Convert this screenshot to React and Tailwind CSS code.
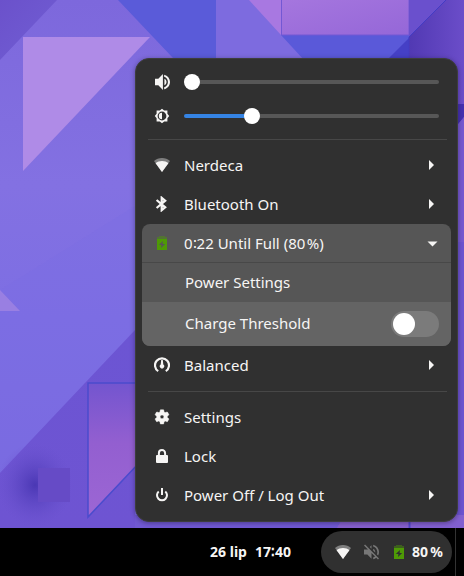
import { useState } from "react";

function Wallpaper() {
  return (
    <svg
      className="absolute inset-0 h-full w-full"
      viewBox="0 0 464 528"
      preserveAspectRatio="xMaxYMax slice"
      aria-hidden="true"
    >
      <defs>
        <linearGradient id="base" x1="0" y1="0" x2="0" y2="1">
          <stop offset="0" stopColor="#7d68dc" />
          <stop offset="0.35" stopColor="#8371e2" />
          <stop offset="0.6" stopColor="#7d6ee3" />
          <stop offset="1" stopColor="#7868e0" />
        </linearGradient>
        <linearGradient id="corner" x1="0" y1="0" x2="1" y2="1">
          <stop offset="0" stopColor="#6b51cb" />
          <stop offset="1" stopColor="#715fd4" />
        </linearGradient>
        <linearGradient id="pink" x1="0" y1="0" x2="1" y2="1">
          <stop offset="0" stopColor="#a576de" />
          <stop offset="1" stopColor="#9567d8" />
        </linearGradient>
        <linearGradient id="shard" x1="0" y1="0" x2="0" y2="1">
          <stop offset="0" stopColor="#7355cf" />
          <stop offset="0.45" stopColor="#935fd0" />
          <stop offset="1" stopColor="#9c66d4" />
        </linearGradient>
        <linearGradient id="edge" x1="0" y1="0" x2="1" y2="0">
          <stop offset="0" stopColor="#5139b3" />
          <stop offset="1" stopColor="#6b4dc9" />
        </linearGradient>
        <linearGradient id="floor" x1="0" y1="0" x2="0" y2="1">
          <stop offset="0" stopColor="#6c55d3" />
          <stop offset="1" stopColor="#6e54d2" />
        </linearGradient>
        <radialGradient id="shade">
          <stop offset="0" stopColor="#4a37b4" />
          <stop offset="0.5" stopColor="#5843bf" stopOpacity="0.5" />
          <stop offset="1" stopColor="#6850cc" stopOpacity="0" />
        </radialGradient>
      </defs>
      <rect width="464" height="528" fill="url(#base)" />
      <path d="M0 0H57L0 60Z" fill="url(#corner)" />
      <path d="M0 290L135 206V330L0 473Z" fill="#7a6ce3" opacity="0.350" />
      <path d="M23 37H150L23 171Z" fill="#af8be7" />
      <path d="M118 0H216V100L173 58Z" fill="#5a5bd9" />
      <path d="M216 0H464V60H216Z" fill="#7d6bdf" />
      <path d="M249 0H281V35Z" fill="#a878e1" />
      <path d="M281 35H409V60H304Z" fill="#5a59d9" />
      <path d="M409 38V60H387Z" fill="#4540c6" />
      <path d="M281 0H409V35H281Z" fill="url(#pink)" />
      <path d="M281.500 0V35H409V0" fill="none" stroke="#7358d4" />
      <path d="M409 0H464V528H409Z" fill="url(#edge)" />
      <path d="M409 0H446L409 37Z" fill="#6a50cd" />
      <path d="M446 0L409 37V60" fill="none" stroke="#433cc4" />
      <path d="M455 104H464V117L455 128Z" fill="#4530b0" />
      <path d="M455 128L464 117V242H455Z" fill="#7558d0" />
      <path d="M455 242H464V528H455Z" fill="#6c53d0" />
      <path d="M0 290L20 311H0Z" fill="#997fe2" />
      <path d="M0 473L135 330V528H0Z" fill="url(#floor)" />
      <ellipse cx="35" cy="485" rx="38" ry="42" fill="url(#shade)" />
      <path d="M38 468H70V502H38Z" fill="#664bc6" />
      <path d="M88 383H172V428L88 517Z" fill="url(#shard)" stroke="#4b4bcd" strokeWidth="1.500" />
      <path d="M135 515H345L337 528H135Z" fill="#7159d3" />
      <path d="M345 515H409V528H337Z" fill="#8660cd" />
      <path d="M409 515H464V528H409Z" fill="#8260d0" />
      <path d="M409.500 515V528" stroke="#5045c8" strokeWidth="2" />
    </svg>
  );
}

function Icon({ children, viewBox = "0 0 16 16", className = "" }) {
  return (
    <svg
      className={`h-4 w-4 shrink-0 ${className}`}
      viewBox={viewBox}
      fill="currentColor"
      aria-hidden="true"
    >
      {children}
    </svg>
  );
}

const VolumeIcon = () => (
  <Icon viewBox="1.800 2.400 19.200 19.200">
    <path d="M3 8v8h4l5.500 5.500V2.500L7 8H3zM16.800 12c0-1.770-1.020-3.290-2.500-4.030v8.050c1.480-.73 2.500-2.250 2.500-4.020zM14 3.230v2.400c2.890.86 4.500 3.300 4.500 6.370s-1.610 5.510-4.500 6.370v2.400c4.010-.91 7-4.490 7-8.770s-2.990-7.860-7-8.770z" />
  </Icon>
);

const MutedIcon = () => (
  <Icon viewBox="1.800 2.400 19.200 19.200" className="text-[#777777]">
    <path d="M16.500 12c0-1.770-1.020-3.290-2.500-4.030v2.210l2.450 2.450c.03-.2.050-.41.050-.63zm2.500 0c0 .94-.2 1.820-.54 2.640l1.510 1.510C20.630 14.910 21 13.500 21 12c0-4.280-2.990-7.860-7-8.770v2.060c2.890.86 5 3.540 5 6.710zM4.270 3L3 4.270 7.730 9H3v6h4l5 5v-6.730l4.250 4.250c-.67.52-1.420.93-2.250 1.180v2.060c1.380-.31 2.630-.95 3.690-1.810L19.730 21 21 19.730l-9-9L4.270 3zM12 4L9.910 6.090 12 8.180V4z" />
  </Icon>
);

const BrightnessIcon = () => (
  <Icon>
    <path
      fillRule="evenodd"
      d="M8 0.800L10.200 2.600H13.400V5.800L15.200 8L13.400 10.200V13.400H10.200L8 15.200L5.800 13.400H2.600V10.200L0.800 8L2.600 5.800V2.600H5.800ZM8 3.600A4.400 4.400 0 1 0 8 12.400A4.400 4.400 0 1 0 8 3.600Z"
    />
    <path d="M8 4.800A3.200 3.200 0 0 0 8 11.200Z" />
  </Icon>
);

const WifiIcon = () => (
  <Icon>
    <path d="M8 1C4.900 1 2.100 2.100 0 4L8 15L16 4C13.900 2.100 11.100 1 8 1Z" opacity="0.400" />
    <path d="M8 4C5.500 4 3.300 4.800 1.600 6.200L8 15L14.400 6.200C12.700 4.800 10.500 4 8 4Z" />
  </Icon>
);

const BluetoothIcon = () => (
  <Icon>
    <path
      d="M2.600 4L11.200 11.300L7.700 14.200V1.800L11.200 4.700L2.600 12"
      fill="none"
      stroke="currentColor"
      strokeWidth="2.200"
    />
  </Icon>
);

const BatteryIcon = () => (
  <Icon className="text-[#4e9a06]">
    <path d="M3 4V2H5V1H11V2H13V4Z" opacity="0.450" />
    <path fillRule="evenodd" d="M3 4H13V15H3ZM9 6L4.800 10H7.400L7 13L11.200 9H8.600Z" />
  </Icon>
);

const GaugeIcon = () => (
  <Icon>
    <path d="M4.200 14.200A7 7 0 1 1 11.800 14.200" fill="none" stroke="currentColor" strokeWidth="2.200" />
    <path d="M7.200 3H8.800L9.300 7.400A2.200 2.200 0 1 1 6.700 7.400Z" />
  </Icon>
);

const CogIcon = () => (
  <Icon viewBox="1.200 1.400 21.600 21.600">
    <path
      fillRule="evenodd"
      d="M19.140 12.940c.04-.3.060-.61.060-.94 0-.32-.02-.64-.07-.94l2.030-1.580c.18-.14.230-.41.120-.61l-1.920-3.320c-.12-.22-.37-.29-.59-.22l-2.390.96c-.5-.38-1.030-.7-1.620-.94L14.400 2.810c-.04-.24-.24-.41-.48-.41h-3.840c-.24 0-.43.17-.47.41L9.250 5.350C8.660 5.590 8.120 5.920 7.630 6.290L5.240 5.330c-.22-.08-.47 0-.59.22L2.740 8.870c-.12.21-.08.47.12.61l2.030 1.580c-.05.3-.09.63-.09.94s.02.640.07.94l-2.030 1.580c-.18.14-.23.41-.12.61l1.920 3.320c.12.220.370.290.590.220l2.390-.96c.5.380 1.030.7 1.620.94l.36 2.540c.05.240.240.410.480.410h3.840c.24 0 .44-.17.47-.41l.36-2.540c.59-.24 1.130-.56 1.620-.94l2.390.96c.22.080.470 0 .59-.22l1.920-3.320c.12-.22.070-.47-.12-.61l-2.010-1.580zM12 14.600a2.600 2.600 0 1 1 0-5.200 2.600 2.600 0 0 1 0 5.200z"
      stroke="currentColor"
      strokeWidth="0.600"
    />
  </Icon>
);

const LockIcon = () => (
  <Icon>
    <path d="M4.900 8V5.200A3.100 3.100 0 0 1 11.100 5.200V8" fill="none" stroke="currentColor" strokeWidth="2" />
    <rect x="2" y="7" width="12" height="8" rx="1" />
  </Icon>
);

const PowerIcon = () => (
  <Icon>
    <path d="M8 1V8" fill="none" stroke="currentColor" strokeWidth="2" />
    <path d="M4.700 4.500A5 5 0 1 0 11.300 4.500" fill="none" stroke="currentColor" strokeWidth="2" />
  </Icon>
);

const ArrowRight = () => (
  <Icon>
    <path d="M6 3L11 8L6 13Z" />
  </Icon>
);

const ArrowDown = () => (
  <Icon>
    <path d="M4.500 6.500H14.500L9.500 11.500Z" />
  </Icon>
);

function SliderRow({ id, label, icon, initial }) {
  const [value, setValue] = useState(initial);
  return (
    <div className="flex h-[34px] items-center gap-3.5 px-3">
      <label htmlFor={id} aria-label={label}>
        {icon}
      </label>
      <input
        id={id}
        type="range"
        min="0"
        max="100"
        value={value}
        onChange={(e) => setValue(Number(e.target.value))}
        style={{ "--level": `${value}%` }}
        className="h-4 min-w-0 flex-1 appearance-none bg-transparent [&::-webkit-slider-runnable-track]:h-1 [&::-webkit-slider-runnable-track]:rounded-full [&::-webkit-slider-runnable-track]:bg-[linear-gradient(to_right,#3584e4_var(--level),#575757_var(--level))] [&::-webkit-slider-thumb]:-mt-1.5 [&::-webkit-slider-thumb]:h-4 [&::-webkit-slider-thumb]:w-4 [&::-webkit-slider-thumb]:appearance-none [&::-webkit-slider-thumb]:rounded-full [&::-webkit-slider-thumb]:bg-white"
      />
    </div>
  );
}

function MenuRow({ icon, children, arrow }) {
  return (
    <button type="button" className="flex h-[39px] w-full items-center gap-3.5 px-3 pb-px text-left">
      {icon}
      <span className="flex-1 pb-px">{children}</span>
      {arrow}
    </button>
  );
}

const Separator = () => <hr className="my-1.5 mr-1 ml-1.5 border-t border-[#474747]" />;

function SystemMenu() {
  const [threshold, setThreshold] = useState(false);
  return (
    <section
      aria-label="System menu"
      className="relative w-full max-w-[323px] rounded-[14px] border border-[#3d3d3d] bg-[#303030] p-1.5 shadow-[0_1px_5px_rgba(0,0,0,0.35)]"
    >
      <SliderRow id="volume" label="Volume" icon={<VolumeIcon />} initial={0} />
      <SliderRow id="brightness" label="Brightness" icon={<BrightnessIcon />} initial={25} />
      <Separator />
      <MenuRow icon={<WifiIcon />} arrow={<ArrowRight />}>Nerdeca</MenuRow>
      <MenuRow icon={<BluetoothIcon />} arrow={<ArrowRight />}>Bluetooth On</MenuRow>
      <div className="overflow-hidden rounded-lg bg-[#565656]">
        <MenuRow icon={<BatteryIcon />} arrow={<ArrowDown />}>
          0∶22 Until Full (80&#8202;%)
        </MenuRow>
        <div className="-mt-px border-t border-[#484848]">
          <button type="button" className="flex h-[39px] w-full items-center pr-3 pb-0.5 pl-[43px] text-left">
            Power Settings
          </button>
          <div className="flex h-11 items-center justify-between bg-[#646464] pr-3 pl-[43px]">
            <label htmlFor="threshold" className="pb-0.5">Charge Threshold</label>
            <input
              id="threshold"
              type="checkbox"
              role="switch"
              checked={threshold}
              onChange={(e) => setThreshold(e.target.checked)}
              className="flex h-[26px] w-12 appearance-none items-center rounded-full bg-[#7b7b7b] p-0.5 before:h-[22px] before:w-[22px] before:rounded-full before:bg-white checked:justify-end checked:bg-[#3584e4]"
            />
          </div>
        </div>
      </div>
      <MenuRow icon={<GaugeIcon />} arrow={<ArrowRight />}>Balanced</MenuRow>
      <Separator />
      <MenuRow icon={<CogIcon />}>Settings</MenuRow>
      <MenuRow icon={<LockIcon />}>Lock</MenuRow>
      <MenuRow icon={<PowerIcon />} arrow={<ArrowRight />}>Power Off / Log Out</MenuRow>
    </section>
  );
}

export default function App() {
  return (
    <div className="flex min-h-screen flex-col bg-black font-['Noto_Sans',sans-serif] text-[15px] leading-5 text-[#f6f5f4]">
      <main className="relative flex flex-1 items-end justify-end overflow-hidden p-1.5">
        <Wallpaper />
        <SystemMenu />
      </main>
      <footer className="flex h-12 items-center justify-end bg-black text-sm font-bold">
        <button type="button" className="mr-[30px] flex gap-2">
          <span>26 lip</span>
          <span>17∶40</span>
        </button>
        <button
          type="button"
          aria-label="System"
          className="flex h-[42px] items-center gap-3 rounded-full bg-[#303030] pr-[9px] pl-3.5"
        >
          <WifiIcon />
          <MutedIcon />
          <span className="flex items-center gap-[5px]">
            <BatteryIcon />
            <span>80&#8201;%</span>
          </span>
        </button>
        <button
          type="button"
          aria-label="Show desktop"
          className="ml-[3px] h-full w-[9px] border-l border-[#333333]"
        />
      </footer>
    </div>
  );
}
